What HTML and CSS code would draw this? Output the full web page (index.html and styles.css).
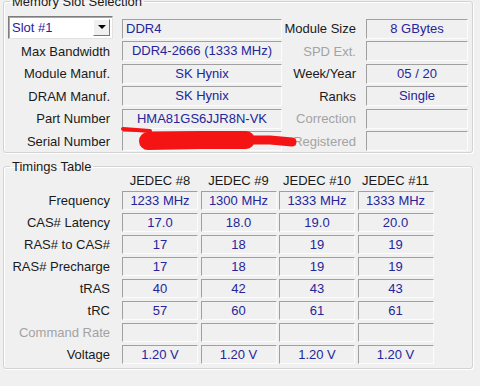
FILE: index.html
```html
<!DOCTYPE html>
<html lang="en">
<head>
  <meta charset="UTF-8" />
  <title>Memory SPD</title>
  <link rel="stylesheet" href="styles.css">
</head>
<body>
  <div class="window">
    <fieldset class="group slot-group">
      <legend>Memory Slot Selection</legend>
      <div class="slot-grid">
        <div class="combo">
          <span class="combo-text">Slot #1</span>
          <span class="combo-btn"><span class="arrow"></span></span>
        </div>
        <div class="field text-left">DDR4</div>
        <div class="label side">Module Size</div>
        <div class="field">8 GBytes</div>

        <div class="label">Max Bandwidth</div>
        <div class="field">DDR4-2666 (1333 MHz)</div>
        <div class="label side disabled">SPD Ext.</div>
        <div class="field"></div>

        <div class="label">Module Manuf.</div>
        <div class="field">SK Hynix</div>
        <div class="label side">Week/Year</div>
        <div class="field">05 / 20</div>

        <div class="label">DRAM Manuf.</div>
        <div class="field">SK Hynix</div>
        <div class="label side">Ranks</div>
        <div class="field">Single</div>

        <div class="label">Part Number</div>
        <div class="field">HMA81GS6JJR8N-VK</div>
        <div class="label side disabled">Correction</div>
        <div class="field"></div>

        <div class="label">Serial Number</div>
        <div class="field"></div>
        <div class="label side disabled">Registered</div>
        <div class="field"></div>
      </div>
    </fieldset>

    <fieldset class="group timings-group">
      <legend>Timings Table</legend>
      <div class="timings-grid">
        <div></div>
        <div class="col-head">JEDEC #8</div>
        <div class="col-head">JEDEC #9</div>
        <div class="col-head">JEDEC #10</div>
        <div class="col-head">JEDEC #11</div>

        <div class="label">Frequency</div>
        <div class="field">1233 MHz</div>
        <div class="field">1300 MHz</div>
        <div class="field">1333 MHz</div>
        <div class="field">1333 MHz</div>

        <div class="label">CAS# Latency</div>
        <div class="field">17.0</div>
        <div class="field">18.0</div>
        <div class="field">19.0</div>
        <div class="field">20.0</div>

        <div class="label">RAS# to CAS#</div>
        <div class="field">17</div>
        <div class="field">18</div>
        <div class="field">19</div>
        <div class="field">19</div>

        <div class="label">RAS# Precharge</div>
        <div class="field">17</div>
        <div class="field">18</div>
        <div class="field">19</div>
        <div class="field">19</div>

        <div class="label">tRAS</div>
        <div class="field">40</div>
        <div class="field">42</div>
        <div class="field">43</div>
        <div class="field">43</div>

        <div class="label">tRC</div>
        <div class="field">57</div>
        <div class="field">60</div>
        <div class="field">61</div>
        <div class="field">61</div>

        <div class="label disabled">Command Rate</div>
        <div class="field"></div>
        <div class="field"></div>
        <div class="field"></div>
        <div class="field"></div>

        <div class="label">Voltage</div>
        <div class="field">1.20 V</div>
        <div class="field">1.20 V</div>
        <div class="field">1.20 V</div>
        <div class="field">1.20 V</div>
      </div>
    </fieldset>

    <!-- red marker over the serial number -->
    <svg class="scribble" width="480" height="386" viewBox="0 0 480 386">
      <g fill="none" stroke="#f41414" stroke-linecap="round" stroke-linejoin="round">
        <path d="M123 129 L150 131" stroke-width="4"/>
        <path d="M148 141 L200 140 L246 140" stroke-width="18"/>
        <path d="M240 140 L270 140 L292 142" stroke-width="9"/>
      </g>
    </svg>
  </div>
</body>
</html>
```

FILE: styles.css
```css
body {
  margin: 0;
  background: #f0f0f0;
  font-family: "Liberation Sans", Arial, sans-serif;
  font-size: 13px;
  color: #1a1a1a;
  overflow: hidden;
}

.window {
  position: relative;
  display: flow-root;
  width: 480px;
  height: 386px;
}

.group {
  margin: 0 7px 0 3px;
  padding: 0;
  border: 1px solid #d3d3d3;
  border-radius: 3px;
  box-shadow: 1px 1px 0 #fff, inset 1px 1px 0 #fff;
  min-width: 0;
}

.group legend {
  margin-left: 6px;
  padding: 0 2px;
  line-height: 14px;
}

.slot-group {
  margin-top: -5.5px;
  padding: 10px 0 1px;
}

.timings-group {
  margin-top: 6.5px;
  padding: 0 0 4.5px;
}

.slot-grid {
  display: grid;
  grid-template-columns: 118px 160px 84px 102px;
  grid-template-rows: repeat(6, 20px);
  row-gap: 2.6px;
}

.timings-grid {
  display: grid;
  grid-template-columns: 115.5px repeat(4, 76px);
  grid-template-rows: 14px repeat(8, 19px);
  column-gap: 2.5px;
  row-gap: 3px;
}

.label {
  text-align: right;
  padding-right: 12px;
  white-space: nowrap;
  align-self: center;
}

.slot-grid .side {
  padding-right: 10px;
}

.timings-grid .label {
  padding-right: 9.5px;
}

.disabled {
  color: #a3a3a3;
}

.col-head {
  text-align: center;
  line-height: 14px;
  white-space: nowrap;
}

.field {
  box-sizing: border-box;
  height: 100%;
  border: 1px solid;
  border-color: #a0a0a0 #fcfcfc #fcfcfc #a0a0a0;
  color: #25259a;
  text-align: center;
  white-space: nowrap;
  overflow: hidden;
}

.slot-grid .field {
  line-height: 18px;
}

.timings-grid .field {
  line-height: 17px;
}

.text-left {
  text-align: left;
  padding-left: 3px;
}

.combo {
  box-sizing: border-box;
  display: flex;
  align-items: stretch;
  width: 105px;
  height: 23px;
  margin: -3px 0 0 4px;
  background: #fff;
  border: 1px solid;
  border-color: #7d7d7d #e2e2e2 #e2e2e2 #7d7d7d;
  box-shadow: inset 1px 1px 0 #a8a8a8;
}

.combo-text {
  flex: 1;
  padding-left: 3px;
  line-height: 21px;
  color: #25259a;
}

.combo-btn {
  box-sizing: border-box;
  width: 17px;
  margin: 2px 2px 2px 0;
  display: flex;
  align-items: center;
  justify-content: center;
  background: #f0f0f0;
  border: 1px solid;
  border-color: #fff #777 #777 #fff;
}

.arrow {
  width: 0;
  height: 0;
  border-top: 4px solid #000;
  border-left: 4px solid transparent;
  border-right: 4px solid transparent;
}

.scribble {
  position: absolute;
  left: 0;
  top: 0;
  pointer-events: none;
}
```
